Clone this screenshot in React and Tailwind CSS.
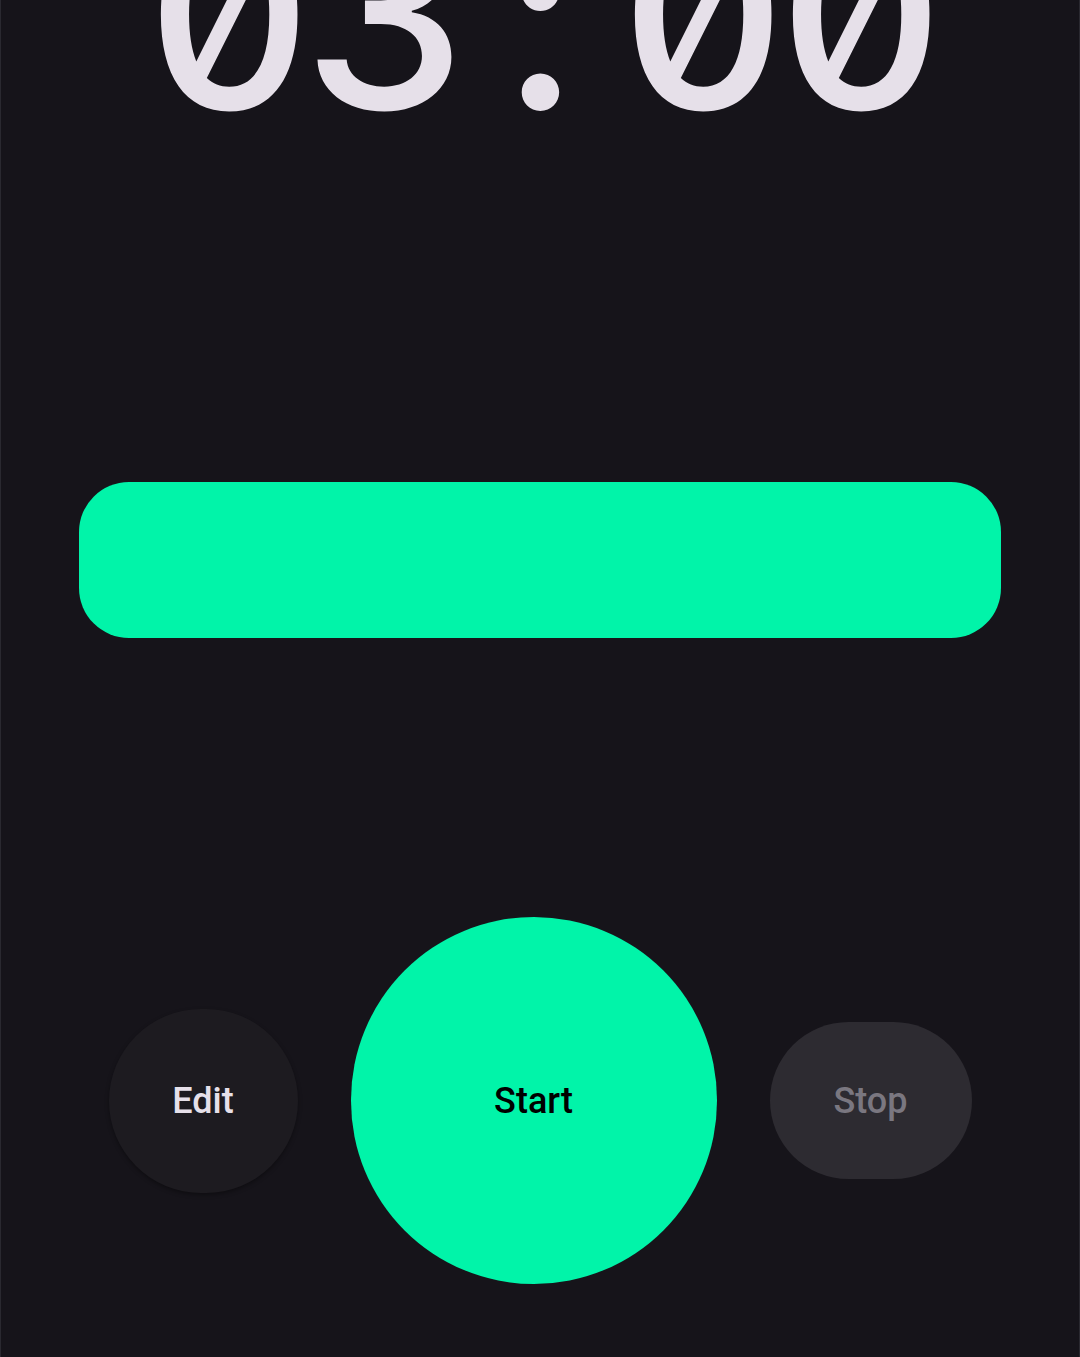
import React from "react";

const DIGITS = ["0", "3", ":", "0", "0"];

const App = () => {
    return (
        <div className="w-[1080px] h-[1357px] overflow-hidden bg-[#16141a] border-l border-r border-[#2a2930] flex flex-col items-center">
            {/* Timer readout */}
            <div
                className="mt-[-115px] text-[260px] font-medium leading-none text-[#e6e0e9] whitespace-nowrap flex tabular-nums slashed-zero"
                style={{ fontFamily: 'Inter, "DejaVu Sans Mono", monospace' }}
            >
                {DIGITS.map((d, i) => (
                    <span key={i} className="inline-block w-[158px] text-center">{d}</span>
                ))}
            </div>

            {/* Progress bar */}
            <div className="mt-[337px] w-[922px] h-[156px] rounded-[50px] bg-[#01f4a9]" />

            {/* Controls */}
            <div
                className="mt-[279px] flex items-center justify-center gap-[53px]"
                style={{ fontFamily: 'Roboto, "Noto Sans", sans-serif' }}
            >
                <button className="w-[189px] h-[184px] rounded-full bg-[#1d1b20] shadow-[0_2px_4px_rgba(0,0,0,0.35)] flex items-center justify-center text-[36px] font-medium text-[#e6e0e9]">
                    Edit
                </button>
                <button className="w-[366px] h-[367px] rounded-full bg-[#01f4a9] flex items-center justify-center text-[36px] font-medium text-black">
                    Start
                </button>
                <button className="w-[202px] h-[157px] rounded-full bg-[#2d2b31] flex items-center justify-center text-[36px] font-medium text-[#7a7780]">
                    Stop
                </button>
            </div>
        </div>
    );
};

export default App;
